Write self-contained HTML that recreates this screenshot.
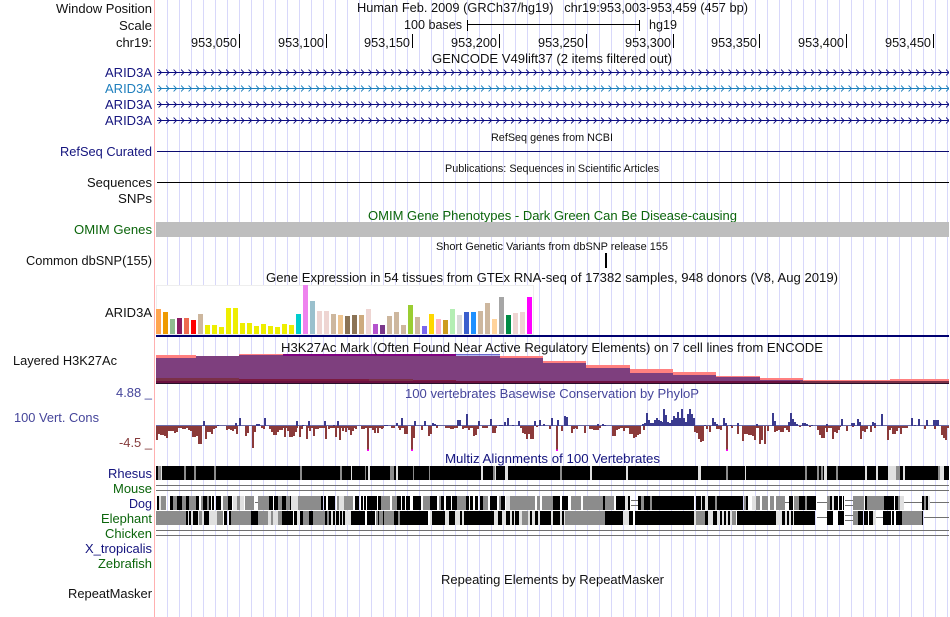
<!DOCTYPE html>
<html><head><meta charset="utf-8"><title>Genome Browser</title>
<style>
html,body{margin:0;padding:0;background:#fff;width:950px;height:617px;overflow:hidden}
svg{display:block}
text{font-family:"Liberation Sans",Arial,sans-serif;font-size:13px;fill:#111}
.s{font-size:11px}
.n{fill:#14147e}.t{fill:#1f7fbd}.g{fill:#0b650b}.c{fill:#45459a}.r{fill:#853b3b}
</style></head><body>
<svg xmlns="http://www.w3.org/2000/svg" width="950" height="617" viewBox="0 0 950 617">
<defs>
<pattern id="grid" patternUnits="userSpaceOnUse" x="155" y="0" width="12" height="10"><rect width="1" height="10" fill="#d8d8fa"/></pattern>
<pattern id="ch1" patternUnits="userSpaceOnUse" x="158.5" y="68" width="7.5" height="16"><path d="M0 1.5l3 3-3 3" fill="none" stroke="#0c0c80" stroke-width="0.9"/></pattern>
<pattern id="ch2" patternUnits="userSpaceOnUse" x="158.5" y="84" width="7.5" height="16"><path d="M0 1.5l3 3-3 3" fill="none" stroke="#1c7fbc" stroke-width="0.9"/></pattern>
</defs>
<rect width="950" height="617" fill="#fff"/>
<rect x="160" y="0" width="790" height="617" fill="url(#grid)"/>
<rect x="154" y="0" width="1" height="617" fill="#ffb0b0"/>

<!-- header -->
<text x="56" y="13" textLength="96" lengthAdjust="spacingAndGlyphs">Window Position</text>
<text x="357" y="12" textLength="391" lengthAdjust="spacingAndGlyphs" xml:space="preserve">Human Feb. 2009 (GRCh37/hg19)   chr19:953,003-953,459 (457 bp)</text>
<text x="119" y="30" textLength="33" lengthAdjust="spacingAndGlyphs">Scale</text>
<text x="404" y="29" textLength="58" lengthAdjust="spacingAndGlyphs">100 bases</text>
<path d="M467.5 20v11M467 24.5H640M639.5 20v11" stroke="#000" stroke-width="1" fill="none"/>
<text x="649" y="29" textLength="28" lengthAdjust="spacingAndGlyphs">hg19</text>
<text x="116" y="47" textLength="36" lengthAdjust="spacingAndGlyphs">chr19:</text>
<g>
<text x="191" y="47" textLength="46" lengthAdjust="spacingAndGlyphs">953,050</text>
<text x="278" y="47" textLength="46" lengthAdjust="spacingAndGlyphs">953,100</text>
<text x="364" y="47" textLength="46" lengthAdjust="spacingAndGlyphs">953,150</text>
<text x="451" y="47" textLength="46" lengthAdjust="spacingAndGlyphs">953,200</text>
<text x="538" y="47" textLength="46" lengthAdjust="spacingAndGlyphs">953,250</text>
<text x="625" y="47" textLength="46" lengthAdjust="spacingAndGlyphs">953,300</text>
<text x="711" y="47" textLength="46" lengthAdjust="spacingAndGlyphs">953,350</text>
<text x="798" y="47" textLength="46" lengthAdjust="spacingAndGlyphs">953,400</text>
<text x="885" y="47" textLength="46" lengthAdjust="spacingAndGlyphs">953,450</text>
</g>
<path d="M239.5 34v14M326.5 34v14M412.5 34v14M499.5 34v14M586.5 34v14M673.5 34v14M759.5 34v14M846.5 34v14M933.5 34v14" stroke="#000" stroke-width="1"/>

<!-- GENCODE -->
<text x="432" y="63" textLength="240" lengthAdjust="spacingAndGlyphs">GENCODE V49lift37 (2 items filtered out)</text>
<text class="n" x="105" y="77" textLength="47" lengthAdjust="spacingAndGlyphs">ARID3A</text>
<text class="t" x="105" y="93" textLength="47" lengthAdjust="spacingAndGlyphs">ARID3A</text>
<text class="n" x="105" y="109" textLength="47" lengthAdjust="spacingAndGlyphs">ARID3A</text>
<text class="n" x="105" y="125" textLength="47" lengthAdjust="spacingAndGlyphs">ARID3A</text>
<rect x="157" y="72" width="792" height="1" fill="#0c0c80"/>
<rect x="157" y="88" width="792" height="1" fill="#1c7fbc"/>
<rect x="157" y="104" width="792" height="1" fill="#0c0c80"/>
<rect x="157" y="120" width="792" height="1" fill="#0c0c80"/>
<rect x="157" y="68" width="792" height="9" fill="url(#ch1)"/>
<rect x="157" y="84" width="792" height="9" fill="url(#ch2)"/>
<rect x="157" y="100" width="792" height="9" fill="url(#ch1)"/>
<rect x="157" y="116" width="792" height="9" fill="url(#ch1)"/>

<!-- RefSeq / Publications -->
<text class="s" x="491" y="141" textLength="122" lengthAdjust="spacingAndGlyphs">RefSeq genes from NCBI</text>
<text class="n" x="60" y="156" textLength="92" lengthAdjust="spacingAndGlyphs">RefSeq Curated</text>
<rect x="157" y="151" width="792" height="1" fill="#0c0c70"/>
<text class="s" x="445" y="172" textLength="214" lengthAdjust="spacingAndGlyphs">Publications: Sequences in Scientific Articles</text>
<text x="87" y="187" textLength="65" lengthAdjust="spacingAndGlyphs">Sequences</text>
<rect x="157" y="182" width="792" height="1" fill="#000"/>
<text x="118" y="203" textLength="34" lengthAdjust="spacingAndGlyphs">SNPs</text>

<!-- OMIM -->
<text class="g" x="368" y="220" textLength="369" lengthAdjust="spacingAndGlyphs">OMIM Gene Phenotypes - Dark Green Can Be Disease-causing</text>
<rect x="156" y="222" width="793" height="15" fill="#bebebe"/>
<text class="g" x="74" y="234" textLength="78" lengthAdjust="spacingAndGlyphs">OMIM Genes</text>

<!-- dbSNP -->
<text class="s" x="436" y="250" textLength="232" lengthAdjust="spacingAndGlyphs">Short Genetic Variants from dbSNP release 155</text>
<rect x="605" y="253" width="2" height="15" fill="#000"/>
<text x="26" y="265" textLength="126" lengthAdjust="spacingAndGlyphs">Common dbSNP(155)</text>

<!-- GTEx -->
<text x="266" y="282" textLength="572" lengthAdjust="spacingAndGlyphs">Gene Expression in 54 tissues from GTEx RNA-seq of 17382 samples, 948 donors (V8, Aug 2019)</text>
<rect x="156.5" y="285.5" width="377" height="49" fill="#fff" stroke="#eee"/>
<text x="105" y="317" textLength="47" lengthAdjust="spacingAndGlyphs">ARID3A</text>
<g shape-rendering="crispEdges">
<rect x="156" y="309" width="5" height="25" fill="#FFA54F"/>
<rect x="163" y="312" width="5" height="22" fill="#EE9A00"/>
<rect x="170" y="319" width="5" height="15" fill="#8FBC8F"/>
<rect x="177" y="318" width="5" height="16" fill="#8B1C62"/>
<rect x="184" y="318" width="5" height="16" fill="#EE6A50"/>
<rect x="191" y="320" width="5" height="14" fill="#FF0000"/>
<rect x="198" y="314" width="5" height="20" fill="#CDB79E"/>
<rect x="205" y="325" width="5" height="9" fill="#EEEE00"/>
<rect x="212" y="325" width="5" height="9" fill="#EEEE00"/>
<rect x="219" y="327" width="5" height="7" fill="#EEEE00"/>
<rect x="226" y="308" width="5" height="26" fill="#EEEE00"/>
<rect x="233" y="308" width="5" height="26" fill="#EEEE00"/>
<rect x="240" y="323" width="5" height="11" fill="#EEEE00"/>
<rect x="247" y="323" width="5" height="11" fill="#EEEE00"/>
<rect x="254" y="326" width="5" height="8" fill="#EEEE00"/>
<rect x="261" y="324" width="5" height="10" fill="#EEEE00"/>
<rect x="268" y="326" width="5" height="8" fill="#EEEE00"/>
<rect x="275" y="327" width="5" height="7" fill="#EEEE00"/>
<rect x="282" y="324" width="5" height="10" fill="#EEEE00"/>
<rect x="289" y="325" width="5" height="9" fill="#EEEE00"/>
<rect x="296" y="314" width="5" height="20" fill="#00CDCD"/>
<rect x="303" y="285" width="5" height="49" fill="#EE82EE"/>
<rect x="310" y="301" width="5" height="33" fill="#9AC0CD"/>
<rect x="317" y="311" width="5" height="23" fill="#EED5D2"/>
<rect x="324" y="311" width="5" height="23" fill="#EED5D2"/>
<rect x="331" y="314" width="5" height="20" fill="#CDB79E"/>
<rect x="338" y="315" width="5" height="19" fill="#EEC591"/>
<rect x="345" y="316" width="5" height="18" fill="#8B7355"/>
<rect x="352" y="315" width="5" height="19" fill="#8B7355"/>
<rect x="359" y="315" width="5" height="19" fill="#CDAA7D"/>
<rect x="366" y="309" width="5" height="25" fill="#EED5D2"/>
<rect x="373" y="324" width="5" height="10" fill="#B452CD"/>
<rect x="380" y="325" width="5" height="9" fill="#7A378B"/>
<rect x="387" y="316" width="5" height="18" fill="#CDB79E"/>
<rect x="394" y="312" width="5" height="22" fill="#CDB79E"/>
<rect x="401" y="325" width="5" height="9" fill="#CDB79E"/>
<rect x="408" y="305" width="5" height="29" fill="#9ACD32"/>
<rect x="415" y="317" width="5" height="17" fill="#CDB79E"/>
<rect x="422" y="326" width="5" height="8" fill="#7A67EE"/>
<rect x="429" y="314" width="5" height="20" fill="#FFD700"/>
<rect x="436" y="319" width="5" height="15" fill="#FFB6C1"/>
<rect x="443" y="320" width="5" height="14" fill="#CD9B1D"/>
<rect x="450" y="309" width="5" height="25" fill="#B4EEB4"/>
<rect x="457" y="315" width="5" height="19" fill="#D9D9D9"/>
<rect x="464" y="312" width="5" height="22" fill="#3A5FCD"/>
<rect x="471" y="312" width="5" height="22" fill="#1E90FF"/>
<rect x="478" y="311" width="5" height="23" fill="#CDB79E"/>
<rect x="485" y="303" width="5" height="31" fill="#CDB79E"/>
<rect x="492" y="319" width="5" height="15" fill="#FFD39B"/>
<rect x="499" y="297" width="5" height="37" fill="#A6A6A6"/>
<rect x="506" y="315" width="5" height="19" fill="#008B45"/>
<rect x="513" y="313" width="5" height="21" fill="#EED5D2"/>
<rect x="520" y="312" width="5" height="22" fill="#EED5D2"/>
<rect x="527" y="297" width="5" height="37" fill="#FF00FF"/>
</g>
<rect x="156" y="335" width="793" height="2" fill="#000070"/>

<!-- Layered H3K27Ac -->
<g shape-rendering="crispEdges">
<path fill="#FF8080" d="M156 355H196V357H239V354H283V356H456V356H500V356H543V361H586V365H630V369H673V372H716V376H760V378H803V380H890V379H949V384H156Z"/>
<path fill="#800080" d="M283 354H456V356H283Z"/>
<path fill="#6a6ad0" d="M456 354H500V355.5H456Z"/>
<path fill="#7E3F7E" d="M156 358H196V356H239V355H283V356H500V358H543V363H586V368H630V373H673V375H716V377H760V380H803V381H949V384H156Z"/>
<path fill="#7a3048" d="M156 378H239V379H369V379H413V380H456V381H949V384H156Z"/>
<path fill="#7a1a40" d="M239 379H369V381H413V380H456V381H586V384H239Z"/>
<path fill="#6b1040" d="M156 381H800V383H156Z"/>
<path fill="#2a102a" d="M156 383H949V384H156Z"/>
</g>
<text x="281" y="352" textLength="542" lengthAdjust="spacingAndGlyphs">H3K27Ac Mark (Often Found Near Active Regulatory Elements) on 7 cell lines from ENCODE</text>
<text x="13" y="365" textLength="104" lengthAdjust="spacingAndGlyphs">Layered H3K27Ac</text>

<!-- PhyloP -->
<text class="c" x="405" y="398" textLength="294" lengthAdjust="spacingAndGlyphs">100 vertebrates Basewise Conservation by PhyloP</text>
<text class="c" x="116" y="397" textLength="36" lengthAdjust="spacingAndGlyphs">4.88 _</text>
<text class="c" x="14" y="422" textLength="85" lengthAdjust="spacingAndGlyphs">100 Vert. Cons</text>
<text class="r" x="119" y="447" textLength="33" lengthAdjust="spacingAndGlyphs">-4.5 _</text>
<rect x="156" y="425" width="793" height="1" fill="#6a6aa8"/>
<path shape-rendering="crispEdges" stroke="#8b3a3a" stroke-width="2" fill="none" d="M156 427H198M205 427H216M226 427H238M246 427H249M262 427H265M270 427H298M306 427H319M320 427H326M330 427H356M362 427H384M398 427H408M445 427H458M463 427H478M483 427H488M493 427H497M520 427H534M572 427H578M590 427H600M612 427H640M695 427H704M717 427H722M743 427H760M775 427H788M818 427H826M827 427H840M861 427H868M888 427H908M942 427H949"/>
<path shape-rendering="crispEdges" stroke="#3b3b8f" stroke-width="2" fill="none" d="M204 426v-5M218 426v-1M236 426v-3M240 426v-8M257 426v-2M259 426v-2M265 426v-8M297 426v-5M303 426v-1M309 426v-5M325 426v-5M334 426v-1M338 426v-5M385 426v-1M387 426v-1M397 426v-3M402 426v-8M415 426v-5M425 426v-5M433 426v-3M435 426v-2M437 426v-1M458 426v-6M460 426v-6M467 426v-12M479 426v-5M491 426v-7M500 426v-1M502 426v-1M505 426v-4M508 426v-8M513 426v-1M519 426v-5M535 426v-5M540 426v-6M544 426v-2M552 426v-8M558 426v-6M565 426v-10M567 426v-9M598 426v-2M603 426v-2M605 426v-1M643 426v-2M645 426v-3M647 426v-13M649 426v-6M651 426v-3M653 426v-3M655 426v-6M657 426v-8M659 426v-6M661 426v-5M663 426v-4M664 426v-17M666 426v-11M668 426v-4M670 426v-3M672 426v-6M674 426v-10M676 426v-8M678 426v-14M680 426v-8M682 426v-17M684 426v-8M686 426v-4M688 426v-12M690 426v-17M692 426v-12M694 426v-8M705 426v-1M713 426v-8M715 426v-4M717 426v-2M724 426v-8M726 426v-3M731 426v-1M738 426v-3M757 426v-2M773 426v-13M775 426v-5M789 426v-4M791 426v-13M793 426v-7M795 426v-4M797 426v-2M803 426v-3M805 426v-3M807 426v-2M812 426v-1M827 426v-2M842 426v-7M852 426v-3M854 426v-3M858 426v-7M860 426v-4M873 426v-4M875 426v-3M882 426v-12M912 426v-8M915 426v-1M919 426v-7M927 426v-6M934 426v-6M936 426v-6M938 426v-6"/>
<path shape-rendering="crispEdges" stroke="#8b3a3a" stroke-width="2" fill="none" d="M157 426v14M159 426v8M161 426v9M163 426v9M165 426v10M167 426v12M169 426v5M171 426v5M173 426v5M175 426v7M177 426v6M179 426v2M183 426v3M185 426v3M187 426v2M189 426v4M191 426v5M193 426v11M195 426v11M197 426v10M199 426v18M201 426v18M206 426v13M208 426v6M210 426v6M212 426v8M214 426v3M216 426v2M227 426v4M229 426v3M231 426v4M233 426v5M235 426v3M237 426v8M246 426v10M248 426v7M253 426v22M255 426v6M262 426v2M264 426v3M270 426v3M272 426v6M274 426v9M276 426v9M278 426v6M280 426v4M282 426v4M285 426v11M288 426v5M290 426v11M292 426v11M294 426v10M296 426v6M300 426v11M302 426v3M307 426v13M310 426v5M314 426v10M316 426v3M318 426v3M320 426v2M326 426v13M329 426v3M336 426v11M340 426v14M343 426v5M346 426v6M349 426v4M351 426v9M353 426v5M356 426v3M362 426v3M364 426v3M368 426v24M373 426v4M375 426v7M378 426v7M382 426v3M392 426v2M394 426v2M400 426v4M405 426v8M407 426v8M412 426v24M414 426v12M422 426v4M429 426v10M431 426v8M437 426v2M447 426v2M449 426v1M451 426v3M453 426v3M456 426v2M463 426v3M469 426v4M474 426v10M476 426v9M478 426v3M483 426v2M485 426v2M487 426v2M493 426v7M495 426v7M523 426v7M525 426v8M527 426v13M529 426v8M531 426v13M533 426v13M537 426v1M550 426v3M557 426v24M562 426v5M572 426v7M574 426v3M577 426v3M585 426v7M590 426v3M592 426v3M594 426v4M596 426v4M598 426v4M600 426v2M613 426v10M615 426v10M617 426v4M619 426v3M621 426v2M624 426v5M630 426v8M632 426v8M634 426v12M636 426v11M638 426v9M640 426v8M644 426v4M695 426v6M697 426v7M699 426v13M701 426v16M703 426v15M707 426v3M710 426v6M717 426v3M719 426v3M721 426v4M727 426v24M732 426v2M738 426v8M743 426v15M745 426v8M747 426v8M749 426v9M751 426v9M753 426v10M755 426v14M760 426v18M762 426v14M765 426v18M768 426v5M775 426v6M777 426v5M779 426v4M781 426v6M783 426v6M785 426v2M787 426v4M789 426v6M800 426v1M810 426v1M818 426v4M820 426v9M822 426v12M824 426v12M827 426v6M833 426v13M835 426v6M837 426v7M839 426v4M840 426v1M847 426v5M853 426v1M861 426v13M863 426v5M865 426v6M867 426v3M871 426v6M875 426v2M888 426v14M890 426v4M893 426v8M895 426v8M897 426v5M899 426v2M901 426v8M905 426v2M907 426v2M925 426v3M935 426v3M942 426v9M944 426v12M946 426v14"/>
<path shape-rendering="crispEdges" fill="#f0f" d="M367 449.5h2v1.5h-2zM411 449.5h2v1.5h-2zM556 449.5h2v1.5h-2zM726 449.5h2v1.5h-2z"/>

<!-- Multiz -->
<text class="n" x="445" y="463" textLength="215" lengthAdjust="spacingAndGlyphs">Multiz Alignments of 100 Vertebrates</text>
<text class="n" x="108" y="478" textLength="44" lengthAdjust="spacingAndGlyphs">Rhesus</text>
<text class="g" x="113" y="493" textLength="39" lengthAdjust="spacingAndGlyphs">Mouse</text>
<text class="n" x="129" y="508" textLength="23" lengthAdjust="spacingAndGlyphs">Dog</text>
<text class="g" x="101" y="523" textLength="51" lengthAdjust="spacingAndGlyphs">Elephant</text>
<text class="g" x="105" y="538" textLength="47" lengthAdjust="spacingAndGlyphs">Chicken</text>
<text class="n" x="85" y="553" textLength="67" lengthAdjust="spacingAndGlyphs">X_tropicalis</text>
<text class="g" x="98" y="568" textLength="54" lengthAdjust="spacingAndGlyphs">Zebrafish</text>

<g shape-rendering="crispEdges" fill="none">
<!-- Rhesus -->
<path stroke="#000" stroke-width="14" d="M156 473H949"/>
<path stroke="#8c8c8c" stroke-width="14" d="M158 473H161M184 473H186M194 473H196M214 473H216M300 473H302M340 473H342M365 473H366M390 473H394M413 473H414M429 473H430M493 473H495M560 473H562M726 473H728M805 473H807M817 473H819M821 473H823M836 473H838M896 473H900M938 473H940"/>
<path stroke="#e0e0e0" stroke-width="14" d="M161 473H162M351 473H352M368 473H370M396 473H398M481 473H483M495 473H496M505 473H508M590 473H592M626 473H628M698 473H701M745 473H746M824 473H827M865 473H867M876 473H878M888 473H896M903 473H905M940 473H944"/>
<!-- Mouse, Chicken -->
<path stroke="#707070" stroke-width="1" d="M156 485.5H949M156 490.5H949M156 530.5H949M156 535.5H949"/>

<!-- Dog lines -->
<path stroke="#707070" stroke-width="1" d="M255 502.5H258M631 500.5H638M631 505.5H638M785 502.5H789M817 502.5H827M845 500.5H853M845 505.5H853M904 502.5H922M930 502.5H949"/>
<path stroke="#e0e0e0" stroke-width="14" d="M159 503H161M233 503H237M240 503H244M291 503H298M339 503H344M506 503H510M625 503H628M701 503H702M705 503H708M752 503H756M832 503H834M870 503H873M900 503H904M928 503H930"/>
<path stroke="#8c8c8c" stroke-width="14" d="M161 503H166M173 503H177M182 503H186M189 503H196M201 503H203M207 503H209M223 503H228M237 503H240M245 503H254M258 503H269M278 503H282M286 503H290M298 503H320M320 503H321M337 503H339M344 503H353M381 503H390M392 503H397M423 503H430M439 503H441M457 503H466M483 503H488M499 503H501M510 503H535M537 503H540M542 503H553M571 503H581M583 503H603M605 503H614M641 503H644M650 503H652M715 503H717M744 503H746M756 503H760M762 503H768M770 503H774M776 503H785M794 503H799M805 503H807M827 503H830M853 503H864M867 503H873M873 503H884M898 503H900M924 503H926"/>
<path stroke="#000" stroke-width="14" d="M157 503H159M170 503H173M177 503H182M186 503H189M196 503H199M203 503H207M209 503H211M212 503H214M216 503H221M228 503H232M269 503H273M274 503H278M282 503H286M290 503H291M321 503H323M324 503H326M328 503H335M355 503H359M361 503H363M364 503H366M367 503H377M378 503H381M397 503H401M402 503H405M406 503H410M413 503H421M430 503H437M441 503H444M446 503H451M452 503H457M466 503H469M470 503H473M475 503H478M480 503H483M490 503H493M493 503H497M501 503H505M553 503H560M562 503H568M603 503H605M616 503H625M628 503H630M638 503H641M644 503H650M652 503H694M696 503H701M702 503H705M708 503H715M717 503H743M746 503H748M789 503H793M799 503H805M807 503H816M830 503H832M834 503H838M839 503H842M843 503H844M865 503H867M884 503H892M892 503H894M895 503H898M922 503H924M926 503H928"/>

<!-- Elephant -->
<path stroke="#707070" stroke-width="1" d="M817 517.5H827M845 515.5H853M845 520.5H853M876 517.5H883M924 517.5H949"/>
<path stroke="#e0e0e0" stroke-width="14" d="M188 518H210M331 518H348M430 518H475M494 518H565M694 518H696M705 518H736M776 518H794M873 518H876M623 518H629"/>
<path stroke="#8c8c8c" stroke-width="14" d="M156 518H186M199 518H202M217 518H223M231 518H251M258 518H268M271 518H273M278 518H282M303 518H309M313 518H331M376 518H418M522 518H528M565 518H605M696 518H705M732 518H736M853 518H858M902 518H922"/>
<path stroke="#e0e0e0" stroke-width="14" d="M202 518H204M210 518H217M268 518H271M273 518H278M297 518H300M348 518H351M630 518H633M708 518H712"/>
<path stroke="#000" stroke-width="14" d="M186 518H188M189 518H191M193 518H198M204 518H206M206 518H209M224 518H227M229 518H231M251 518H258M282 518H293M294 518H297M300 518H303M309 518H313M325 518H327M329 518H331M333 518H335M336 518H339M340 518H342M343 518H345M351 518H365M367 518H375M378 518H379M383 518H384M394 518H398M400 518H406M406 518H418M418 518H428M432 518H445M449 518H455M460 518H462M464 518H475M475 518H494M498 518H502M506 518H510M512 518H514M515 518H519M530 518H532M535 518H538M540 518H551M553 518H560M562 518H564M605 518H614M614 518H623M629 518H633M635 518H694M705 518H708M713 518H717M720 518H722M724 518H726M728 518H730M737 518H776M782 518H785M787 518H789M791 518H793M794 518H815M827 518H833M838 518H844M858 518H863M864 518H868M869 518H873M883 518H891M892 518H894M896 518H902M922 518H923"/>
</g>

<!-- RepeatMasker -->
<text x="441" y="584" textLength="223" lengthAdjust="spacingAndGlyphs">Repeating Elements by RepeatMasker</text>
<text x="68" y="598" textLength="84" lengthAdjust="spacingAndGlyphs">RepeatMasker</text>
</svg>
</body></html>
